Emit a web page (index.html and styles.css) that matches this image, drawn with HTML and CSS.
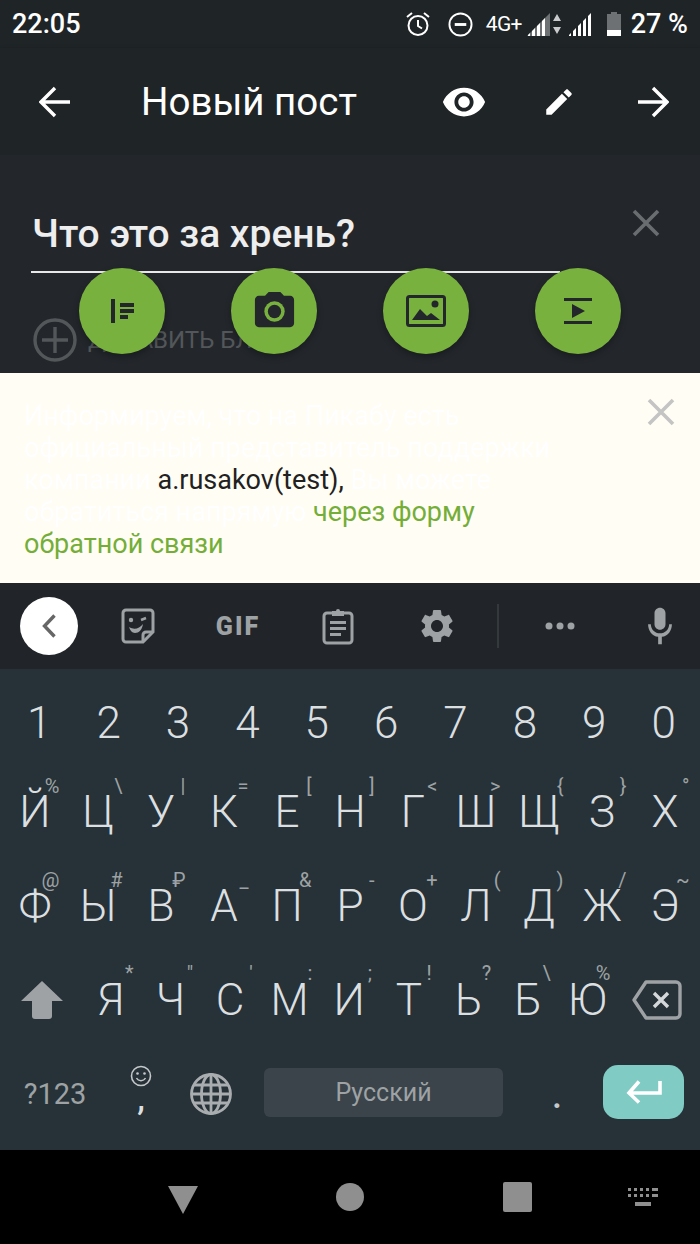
FILE: index.html
```html
<!DOCTYPE html>
<html>
  <head>
    <title>Новый пост</title>
    <link rel="stylesheet" href="styles.css">
  </head>
  <body>
    <div class="status-bar">
      <span class="clock">22:05</span>
      <div class="status-icons">
        <svg class="st-alarm" width="26" height="26" viewBox="0 0 26 26"><circle cx="13" cy="14.5" r="9.5" fill="none" stroke="#fff" stroke-width="2"/><path d="M13 9v6l4 2.5M2 6l5-4M24 6l-5-4" fill="none" stroke="#fff" stroke-width="2"/></svg>
        <svg class="st-dnd" width="25" height="25" viewBox="0 0 26 26"><circle cx="13" cy="13" r="11.500" fill="none" stroke="#fff" stroke-width="2"/><path d="M7 11.500h12v3H7z" fill="#fff"/></svg>
        <span class="st-net">4G+</span>
        <svg class="st-signal" width="23" height="24" viewBox="0 0 23 24"><path d="M0 24L23 1v23z" fill="#6d7173"/><path d="M1 24v-1l2-2v3zM5 24v-5l3-3v8zM10 24v-10l3-3v13zM15 24V9l3-3v18z" fill="#fff"/></svg>
        <svg class="st-arrows" width="8" height="20" viewBox="0 0 8 20"><path d="M4 0l4 7H0zM4 20l4-7H0z" fill="#c9cbcc"/></svg>
        <svg class="st-signal2" width="23" height="24" viewBox="0 0 23 24"><path d="M1 24v-1l2-2v3zM5 24v-5l3-3v8zM10 24v-10l3-3v13zM15 24V9l3-3v18zM20 24V4l3-3v23z" fill="#fff"/></svg>
        <svg class="st-battery" width="14" height="24" viewBox="0 0 14 24"><path d="M4 0h6v2h4v22H0V2h4z" fill="#6d7173"/><path d="M0 18h14v6H0z" fill="#fff"/></svg>
        <span class="st-percent">27 %</span>
      </div>
    </div>

    <div class="toolbar">
      <svg class="tb-back" width="32" height="32" viewBox="0 0 32 32"><path d="M31 16H3M16 2L2 16l14 14" fill="none" stroke="#fff" stroke-width="3.4"/></svg>
      <span class="tb-title">Новый пост</span>
      <svg class="tb-eye" width="46" height="46" viewBox="0 0 24 24"><path fill="#fff" d="M12 4.5C7 4.5 2.73 7.61 1 12c1.73 4.39 6 7.5 11 7.5s9.27-3.11 11-7.5c-1.73-4.39-6-7.5-11-7.5zM12 17c-2.76 0-5-2.24-5-5s2.24-5 5-5 5 2.24 5 5-2.24 5-5 5zm0-8c-1.66 0-3 1.34-3 3s1.34 3 3 3 3-1.34 3-3-1.34-3-3-3z"/></svg>
      <svg class="tb-pencil" width="34" height="34" viewBox="0 0 24 24"><path fill="#fff" d="M3 17.25V21h3.75L17.81 9.94l-3.75-3.75L3 17.25zM20.71 7.04c.39-.39.39-1.02 0-1.41l-2.34-2.34c-.39-.39-1.02-.39-1.41 0l-1.83 1.83 3.75 3.75 1.83-1.83z"/></svg>
      <svg class="tb-next" width="32" height="32" viewBox="0 0 32 32"><path d="M1 16h28M16 2l14 14-14 14" fill="none" stroke="#fff" stroke-width="3.4"/></svg>
    </div>

    <div class="editor">
      <div class="post-block">
        <div class="title-field">Что это за хрень?</div>
        <svg class="block-close" width="28" height="28" viewBox="0 0 28 28"><path d="M2 2l24 24M26 2L2 26" stroke="#6a6d70" stroke-width="3.6"/></svg>
      </div>
      <div class="add-block">
        <svg width="44" height="44" viewBox="0 0 44 44"><circle cx="22" cy="22" r="20" fill="none" stroke="#53575a" stroke-width="3.4"/><path d="M22 9v26M9 22h26" stroke="#53575a" stroke-width="3.4"/></svg>
        <span>ДОБАВИТЬ БЛОК</span>
      </div>

      <div class="fab-row">
        <div class="fab">
          <svg width="30" height="30" viewBox="0 0 30 30"><path d="M4 3h4v24H4zM13 7h14v4H13zM13 13h14v4H13zM13 19h8v4h-8z" fill="#23272c"/></svg>
        </div>
        <div class="fab">
          <svg width="47" height="47" viewBox="0 0 24 24"><path fill="#23272c" d="M9 2L7.170 4H4c-1.100 0-2 .9-2 2v12c0 1.100.9 2 2 2h16c1.100 0 2-.9 2-2V6c0-1.100-.9-2-2-2h-3.170L15 2H9z"/><circle cx="12" cy="12" r="5.200" fill="#79b13f"/><circle cx="12" cy="12" r="3.400" fill="#23272c"/></svg>
        </div>
        <div class="fab">
          <svg width="40" height="32" viewBox="0 0 40 32"><rect x="1.500" y="1.500" width="37" height="29" rx="2" fill="none" stroke="#23272c" stroke-width="3"/><path d="M6 25l8-11 7 7 4-3 9 7z" fill="#23272c"/><circle cx="29" cy="9" r="3.500" fill="#23272c"/></svg>
        </div>
        <div class="fab">
          <svg width="28" height="26" viewBox="0 0 28 26"><path d="M0 0h28v3H0zM0 23h28v3H0zM8 6l13 7-13 7z" fill="#23272c"/></svg>
        </div>
      </div>
    </div>

    <div class="notice">
      <p>Информируем, что на Пикабу есть официальный представитель поддержки компании <span class="notice-name">a.rusakov(test),</span> Вы можете обратиться напрямую <a class="notice-link">через форму обратной связи</a></p>
      <svg class="notice-close" width="28" height="28" viewBox="0 0 28 28"><path d="M2 2l24 24M26 2L2 26" stroke="#c4c4c4" stroke-width="3.6"/></svg>
    </div>

    <div class="suggest-bar">
      <div class="sg-back">
        <svg width="14" height="24" viewBox="0 0 14 24"><path d="M12.500 1.500L2.500 12l10 10.500" fill="none" stroke="#666" stroke-width="3.400"/></svg>
      </div>
      <div class="sg-item sg-first">
        <svg width="34" height="36" viewBox="0 0 34 36"><path d="M5 2h24a3 3 0 0 1 3 3v19L22 34H5a3 3 0 0 1-3-3V5a3 3 0 0 1 3-3z" fill="none" stroke="#9ea2a4" stroke-width="3"/><path d="M22 34v-7a3 3 0 0 1 3-3h7" fill="none" stroke="#9ea2a4" stroke-width="3"/><circle cx="10" cy="12" r="2.200" fill="#9ea2a4"/><path d="M20 12l5-2" stroke="#9ea2a4" stroke-width="2.500"/><path d="M8 19c5 3 10 2 14-3-1 6-4 9-8 9-3 0-5-3-6-6z" fill="#9ea2a4"/></svg>
      </div>
      <div class="sg-item sg-gif">GIF</div>
      <div class="sg-item">
        <svg width="32" height="38" viewBox="0 0 32 38"><path d="M10 6H5a3 3 0 0 0-3 3v24a3 3 0 0 0 3 3h22a3 3 0 0 0 3-3V9a3 3 0 0 0-3-3h-5" fill="none" stroke="#9ea2a4" stroke-width="3"/><path d="M10 4h4a2 2 0 0 1 4 0h4v5H10zM8 14h16v3H8zM8 20h16v3H8zM8 26h11v3H8z" fill="#9ea2a4"/></svg>
      </div>
      <div class="sg-item sg-gear">
        <svg width="40" height="40" viewBox="0 0 24 24"><path fill="#9ea2a4" d="M19.140 12.940c.04-.3.06-.61.06-.94 0-.32-.02-.64-.07-.94l2.030-1.580c.18-.14.23-.41.12-.61l-1.920-3.320c-.12-.22-.37-.29-.59-.22l-2.390.96c-.5-.38-1.030-.7-1.620-.94l-.36-2.540c-.04-.24-.24-.41-.48-.41h-3.840c-.24 0-.43.17-.47.41l-.36 2.540c-.59.24-1.130.57-1.620.94l-2.390-.96c-.22-.08-.47 0-.59.22L2.740 8.870c-.12.21-.08.47.12.61l2.030 1.580c-.05.3-.09.63-.09.94s.02.64.07.94l-2.030 1.580c-.18.14-.23.41-.12.61l1.920 3.320c.12.22.37.29.59.22l2.390-.96c.5.38 1.030.7 1.620.94l.36 2.540c.05.24.24.41.48.41h3.840c.24 0 .44-.17.47-.41l.36-2.540c.59-.24 1.130-.56 1.620-.94l2.390.96c.22.08.47 0 .59-.22l1.920-3.320c.12-.22.07-.47-.12-.61l-2.010-1.580zM12 15.600c-1.980 0-3.600-1.620-3.600-3.600s1.620-3.600 3.600-3.600 3.600 1.620 3.600 3.600-1.620 3.600-3.600 3.600z"/></svg>
      </div>
      <div class="sg-divider"></div>
      <div class="sg-item sg-more">
        <svg width="30" height="8" viewBox="0 0 30 8"><circle cx="4" cy="4" r="3.500" fill="#9ea2a4"/><circle cx="15" cy="4" r="3.500" fill="#9ea2a4"/><circle cx="26" cy="4" r="3.500" fill="#9ea2a4"/></svg>
      </div>
      <div class="sg-item sg-mic">
        <svg width="44" height="44" viewBox="0 0 24 24"><path fill="#9ea2a4" d="M12 14c1.660 0 3-1.340 3-3V5c0-1.660-1.340-3-3-3S9 3.340 9 5v6c0 1.660 1.340 3 3 3zM17 11c0 2.760-2.240 5-5 5s-5-2.240-5-5H5.500c0 3.530 2.110 6.430 5.500 6.920V22h2v-4.080c3.390-.49 5.500-3.390 5.500-6.920H17z"/></svg>
      </div>
    </div>

    <div class="keyboard">
      <div class="kb-row kb-digits">
        <div class="key">1</div><div class="key">2</div><div class="key">3</div><div class="key">4</div><div class="key">5</div>
        <div class="key">6</div><div class="key">7</div><div class="key">8</div><div class="key">9</div><div class="key">0</div>
      </div>
      <div class="kb-row kb-letters">
        <div class="key"><span class="hint">%</span>Й</div>
        <div class="key"><span class="hint">\</span>Ц</div>
        <div class="key"><span class="hint">|</span>У</div>
        <div class="key"><span class="hint">=</span>К</div>
        <div class="key"><span class="hint">[</span>Е</div>
        <div class="key"><span class="hint">]</span>Н</div>
        <div class="key"><span class="hint">&lt;</span>Г</div>
        <div class="key"><span class="hint">&gt;</span>Ш</div>
        <div class="key"><span class="hint">{</span>Щ</div>
        <div class="key"><span class="hint">}</span>З</div>
        <div class="key"><span class="hint">°</span>Х</div>
      </div>
      <div class="kb-row kb-letters">
        <div class="key"><span class="hint">@</span>Ф</div>
        <div class="key"><span class="hint">#</span>Ы</div>
        <div class="key"><span class="hint">₽</span>В</div>
        <div class="key"><span class="hint">_</span>А</div>
        <div class="key"><span class="hint">&amp;</span>П</div>
        <div class="key"><span class="hint">-</span>Р</div>
        <div class="key"><span class="hint">+</span>О</div>
        <div class="key"><span class="hint">(</span>Л</div>
        <div class="key"><span class="hint">)</span>Д</div>
        <div class="key"><span class="hint">/</span>Ж</div>
        <div class="key"><span class="hint">~</span>Э</div>
      </div>
      <div class="kb-row kb-shift">
        <div class="key key-shift">
          <svg width="42" height="38" viewBox="0 0 42 38"><path d="M21 0l21 20H31v15a3 3 0 0 1-3 3H14a3 3 0 0 1-3-3V20H0z" fill="#9ea2a4"/></svg>
        </div>
        <div class="key"><span class="hint">*</span>Я</div>
        <div class="key"><span class="hint">"</span>Ч</div>
        <div class="key"><span class="hint">'</span>С</div>
        <div class="key"><span class="hint">:</span>М</div>
        <div class="key"><span class="hint">;</span>И</div>
        <div class="key"><span class="hint">!</span>Т</div>
        <div class="key"><span class="hint">?</span>Ь</div>
        <div class="key"><span class="hint">\</span>Б</div>
        <div class="key"><span class="hint">%</span>Ю</div>
        <div class="key">
          <svg width="50" height="40" viewBox="0 0 50 40"><path d="M14 2h30a4 4 0 0 1 4 4v28a4 4 0 0 1-4 4H14L2 20z" fill="none" stroke="#9ea2a4" stroke-width="3.400" stroke-linejoin="round"/><path d="M22 13l14 14M36 13L22 27" stroke="#d5d8da" stroke-width="3.400"/></svg>
        </div>
      </div>
      <div class="kb-row kb-bottom">
        <div class="key key-symbols">?123</div>
        <div class="key key-comma">
          <svg class="comma-smile" width="22" height="22" viewBox="0 0 22 22"><circle cx="11" cy="11" r="9.500" fill="none" stroke="#c5c8ca" stroke-width="1.600"/><circle cx="7.500" cy="8.500" r="1.300" fill="#c5c8ca"/><circle cx="14.500" cy="8.500" r="1.300" fill="#c5c8ca"/><path d="M6.500 13c2 3.500 7 3.500 9 0" fill="none" stroke="#c5c8ca" stroke-width="1.500"/></svg>
          <span>,</span>
        </div>
        <div class="key">
          <svg width="42" height="42" viewBox="0 0 42 42"><g fill="none" stroke="#a9adaf" stroke-width="2.800"><circle cx="21" cy="21" r="19.500"/><ellipse cx="21" cy="21" rx="9.500" ry="19.500"/><path d="M21 1.500v39M4 12h34M4 30h34M1.500 21h39"/></g></svg>
        </div>
        <div class="key-space"><span>Русский</span></div>
        <div class="key key-period">.</div>
        <div class="key-enter">
          <svg width="36" height="24" viewBox="0 0 36 24"><path d="M34 1v12H4M13 1.500L3 13l10 9.500" fill="none" stroke="#fff" stroke-width="3.600"/></svg>
        </div>
      </div>
    </div>

    <div class="nav-bar">
      <svg class="nav-back" width="32" height="28" viewBox="0 0 32 28"><path d="M1 0h30L16 28z" fill="#8f8f8f"/></svg>
      <svg width="28" height="28" viewBox="0 0 28 28"><circle cx="14" cy="14" r="14" fill="#8f8f8f"/></svg>
      <svg width="29" height="30" viewBox="0 0 29 30"><rect width="29" height="30" rx="2" fill="#8f8f8f"/></svg>
      <svg width="30" height="18" viewBox="0 0 30 18"><path d="M0 0h3v3H0zM6 0h3v3H6zM12 0h3v3h-3zM18 0h3v3h-3zM24 0h3v3h-3zM27 0h3v3h-3zM0 6h3v3H0zM6 6h3v3H6zM12 6h3v3h-3zM18 6h3v3h-3zM24 6h3v3h-3zM27 6h3v3h-3zM7 14h16v4H7z" fill="#8f8f8f"/></svg>
    </div>
  </body>
</html>
```

FILE: styles.css
```css
* {
  box-sizing: border-box;
}

body {
  margin: 0;
  width: 700px;
  height: 1244px;
  overflow: hidden;
  background: #000;
  font-family: Roboto, "Liberation Sans", sans-serif;
}

.status-bar {
  display: flex;
  align-items: center;
  justify-content: space-between;
  height: 48px;
  padding: 0 12px;
  background: #1f2427;
  color: #fff;
}

.clock {
  font-size: 27px;
  font-weight: 500;
}

.status-icons {
  display: flex;
  align-items: center;
}

.st-dnd {
  margin-left: 17px;
}

.st-net {
  margin-left: 13px;
  font-size: 21px;
  letter-spacing: -0.7px;
}

.st-signal {
  margin-left: 5px;
}

.st-arrows {
  margin-left: 3px;
}

.st-signal2 {
  margin-left: 7px;
}

.st-battery {
  margin-left: 16px;
}

.st-percent {
  margin-left: 10px;
  font-size: 27px;
  font-weight: 500;
}

.toolbar {
  display: flex;
  align-items: center;
  height: 107px;
  padding: 0 31px 0 39px;
  background: #1f2427;
  box-shadow: 0 1px 4px rgba(0, 0, 0, 0.25);
  position: relative;
}

.tb-title {
  margin-left: 70px;
  font-size: 38.5px;
  color: #fff;
}

.tb-eye {
  margin-left: auto;
  margin-top: 1px;
}

.tb-pencil {
  margin-left: 55px;
}

.tb-next {
  margin-left: 61px;
}

.editor {
  position: relative;
  height: 218px;
  background: #23272c;
  overflow: hidden;
}

.post-block {
  display: flex;
  align-items: flex-start;
  padding: 54px 0 0 31px;
}

.title-field {
  width: 529px;
  height: 64px;
  padding-left: 1px;
  border-bottom: 2px solid #e8e8e8;
  font-size: 39px;
  font-weight: 500;
  line-height: 50px;
  color: #eeeeee;
}

.block-close {
  margin-left: 72px;
}

.add-block {
  display: flex;
  align-items: center;
  gap: 11px;
  margin-top: 45px;
  padding-left: 33px;
  font-size: 24px;
  color: #53575a;
}

/* кнопки лежат поверх поля и строки "добавить блок" */
.fab-row {
  position: absolute;
  left: 79px;
  top: 113px;
  display: flex;
  gap: 66px;
}

.fab {
  display: flex;
  align-items: center;
  justify-content: center;
  width: 86px;
  height: 86px;
  border-radius: 50%;
  background: #79b13f;
  box-shadow: 0 3px 6px rgba(0, 0, 0, 0.3);
}

.notice {
  position: relative;
  height: 210px;
  padding: 27px 116px 0 24px;
  background: #fffdf4;
}

.notice p {
  margin: 0;
  font-size: 27px;
  line-height: 32px;
  color: #ffffff;
}

.notice-name {
  color: #212121;
}

.notice-link {
  color: #74ae38;
}

.notice-close {
  position: absolute;
  right: 25px;
  top: 25px;
}

.suggest-bar {
  display: flex;
  align-items: center;
  height: 86px;
  padding-left: 20px;
  background: #212529;
}

.sg-back {
  display: flex;
  align-items: center;
  justify-content: center;
  width: 58px;
  height: 58px;
  margin-right: 10px;
  border-radius: 50%;
  background: #fff;
}

.sg-item {
  display: flex;
  align-items: center;
  justify-content: center;
  width: 100px;
}

.sg-gif {
  font-size: 25px;
  font-weight: 900;
  letter-spacing: 2px;
  color: #9ea2a4;
}

.sg-gear {
  width: 98px;
}

.sg-divider {
  width: 2px;
  height: 44px;
  margin-left: 11px;
  background: #34393c;
}

.sg-more {
  margin-left: 11px;
}

.sg-mic {
  width: 80px;
  margin-left: 10px;
}

.keyboard {
  height: 481px;
  padding-top: 11px;
  background: #263238;
}

.kb-row {
  display: grid;
  height: 94px;
}

.kb-digits {
  grid-template-columns: repeat(10, 69.4px);
  height: 85px;
  padding: 0 0 0 4.5px;
}

.kb-letters {
  grid-template-columns: repeat(11, 63px);
  padding: 0 3.5px;
}

.kb-shift {
  grid-template-columns: 81px repeat(9, 59.6px) 80px;
}

.kb-bottom {
  grid-template-columns: 110px 62px 78px 253px 100px 81px;
}

.key {
  position: relative;
  display: flex;
  align-items: center;
  justify-content: center;
  font-size: 44px;
  font-weight: 300;
  color: #dcdfe0;
}

.key-shift {
  padding-right: -3px;
  margin-left: 3px;
}

.hint {
  position: absolute;
  right: 7px;
  top: 9px;
  font-size: 20px;
  font-weight: 400;
  color: #9ea2a4;
}

.kb-shift .hint {
  top: 8px;
}

.key-symbols {
  font-size: 29px;
  font-weight: 400;
  color: #9ea2a4;
}

.key-comma {
  flex-direction: column;
  padding-bottom: 6px;
}

.key-comma span {
  height: 30px;
  font-size: 34px;
  font-weight: 500;
  line-height: 22px;
}

.key-period {
  padding: 4px 0 0 8px;
  font-size: 36px;
  font-weight: 500;
  color: #c5c8ca;
}

.key-space {
  display: flex;
  align-items: center;
  justify-content: center;
  height: 49px;
  margin: 21px 0 0 14px;
  border-radius: 6px;
  background: #3b444b;
  font-size: 25px;
  color: #9ea2a4;
}

.key-enter {
  display: flex;
  align-items: center;
  justify-content: center;
  height: 54px;
  margin-top: 18px;
  border-radius: 15px;
  background: #80cbc4;
}

.nav-bar {
  display: grid;
  grid-template-columns: repeat(3, 167px) 85px;
  justify-items: center;
  align-items: center;
  height: 94px;
  padding-left: 99.5px;
  background: #000;
}

.nav-back {
  margin-top: 5px;
}
```
